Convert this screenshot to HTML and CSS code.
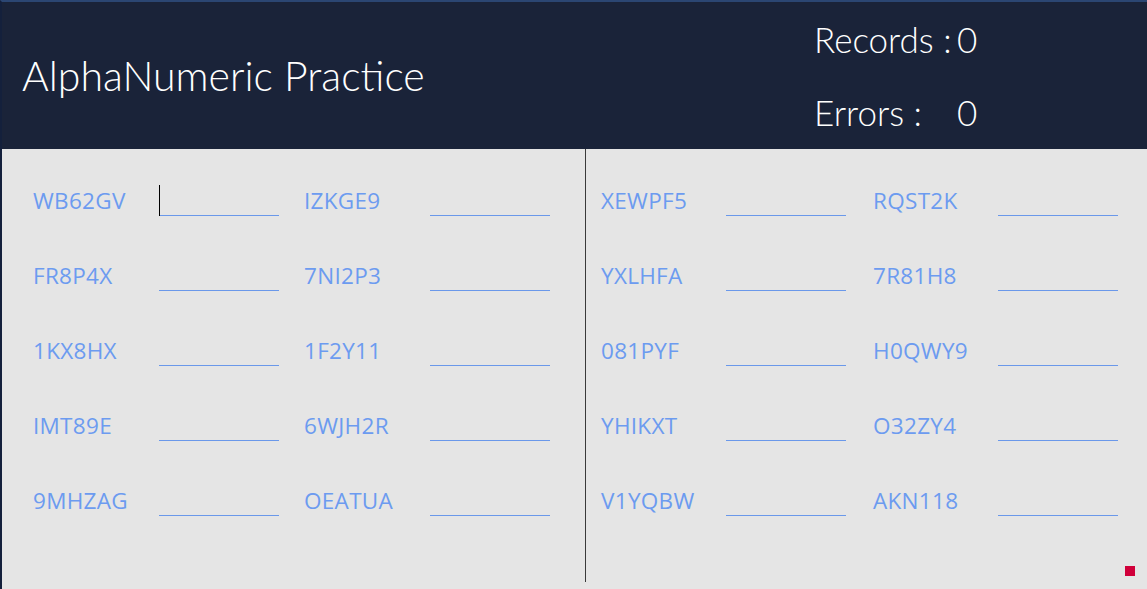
FILE: index.html
```html
<!DOCTYPE html>
<html>
<head>
<meta charset="utf-8">
<link rel="stylesheet" href="styles.css">
</head>
<body>
<div class="window">
  <header class="header">
    <h1 class="title">AlphaNumeric Practice</h1>
    <div class="stats">
      <span class="stat-label">Records :</span><span class="stat-value">0</span>
      <span class="stat-label">Errors :</span><span class="stat-value">0</span>
    </div>
  </header>
  <main class="content">
    <section class="panel panel-left">
      <span class="code">WB62GV</span><span class="field active"><span class="caret"></span></span>
      <span class="code">IZKGE9</span><span class="field"></span>
      <span class="code">FR8P4X</span><span class="field"></span>
      <span class="code">7NI2P3</span><span class="field"></span>
      <span class="code">1KX8HX</span><span class="field"></span>
      <span class="code">1F2Y11</span><span class="field"></span>
      <span class="code">IMT89E</span><span class="field"></span>
      <span class="code">6WJH2R</span><span class="field"></span>
      <span class="code">9MHZAG</span><span class="field"></span>
      <span class="code">OEATUA</span><span class="field"></span>
    </section>
    <section class="panel panel-right">
      <span class="code">XEWPF5</span><span class="field"></span>
      <span class="code">RQST2K</span><span class="field"></span>
      <span class="code">YXLHFA</span><span class="field"></span>
      <span class="code">7R81H8</span><span class="field"></span>
      <span class="code">081PYF</span><span class="field"></span>
      <span class="code">H0QWY9</span><span class="field"></span>
      <span class="code">YHIKXT</span><span class="field"></span>
      <span class="code">O32ZY4</span><span class="field"></span>
      <span class="code">V1YQBW</span><span class="field"></span>
      <span class="code">AKN118</span><span class="field"></span>
    </section>
    <span class="marker"></span>
  </main>
</div>
</body>
</html>
```
FILE: styles.css
```css
html, body {
  margin: 0;
  padding: 0;
  width: 1147px;
  height: 589px;
  overflow: hidden;
  background: #1a2339;
}
.window {
  width: 1147px;
  height: 589px;
  box-sizing: border-box;
  border-top: 2px solid #2b4673;
  border-left: 2px solid #14203c;
  display: flex;
  flex-direction: column;
  font-family: "Open Sans", "Noto Sans", sans-serif;
}
.header {
  height: 147px;
  background: #1a2339;
  color: #ffffff;
  display: flex;
  align-items: center;
  justify-content: space-between;
}
.title {
  margin: 0 0 0 20px;
  font-family: "Lato", "Open Sans", sans-serif;
  font-weight: 300;
  font-size: 41px;
  letter-spacing: 0;
}
.stats {
  display: grid;
  grid-template-columns: 143px 40px;
  row-gap: 33px;
  margin-right: 150px;
  margin-top: 0;
  font-family: "Lato", "Open Sans", sans-serif;
  font-weight: 300;
  font-size: 35px;
  line-height: 40px;
}
.content {
  flex: 1;
  background: #e5e5e5;
  display: flex;
  position: relative;
}
.panel {
  height: 433px;
  box-sizing: border-box;
  display: grid;
  grid-template-rows: repeat(5, 32px);
  row-gap: 43px;
  align-items: center;
  align-content: start;
  padding-top: 35px;
}
.panel-left {
  width: 584px;
  border-right: 1px solid #3a3a3a;
  padding-left: 31px;
  grid-template-columns: 126px 145px 126px 120px;
}
.panel-right {
  flex: 1;
  padding-left: 15px;
  grid-template-columns: 125px 147px 125px 120px;
}
.code {
  color: #6c9bf0;
  font-size: 22.5px;
  line-height: 32px;
  padding-top: 2px;
  letter-spacing: 0.3px;
}
.field {
  width: 120px;
  height: 32px;
  box-sizing: border-box;
  border-bottom: 1px solid #6a98ea;
  position: relative;
}
.caret {
  position: absolute;
  left: 0;
  top: 1px;
  width: 1px;
  height: 31px;
  background: #000000;
}
.marker {
  position: absolute;
  right: 12px;
  bottom: 13px;
  width: 10px;
  height: 10px;
  background: #d0003a;
}
```
